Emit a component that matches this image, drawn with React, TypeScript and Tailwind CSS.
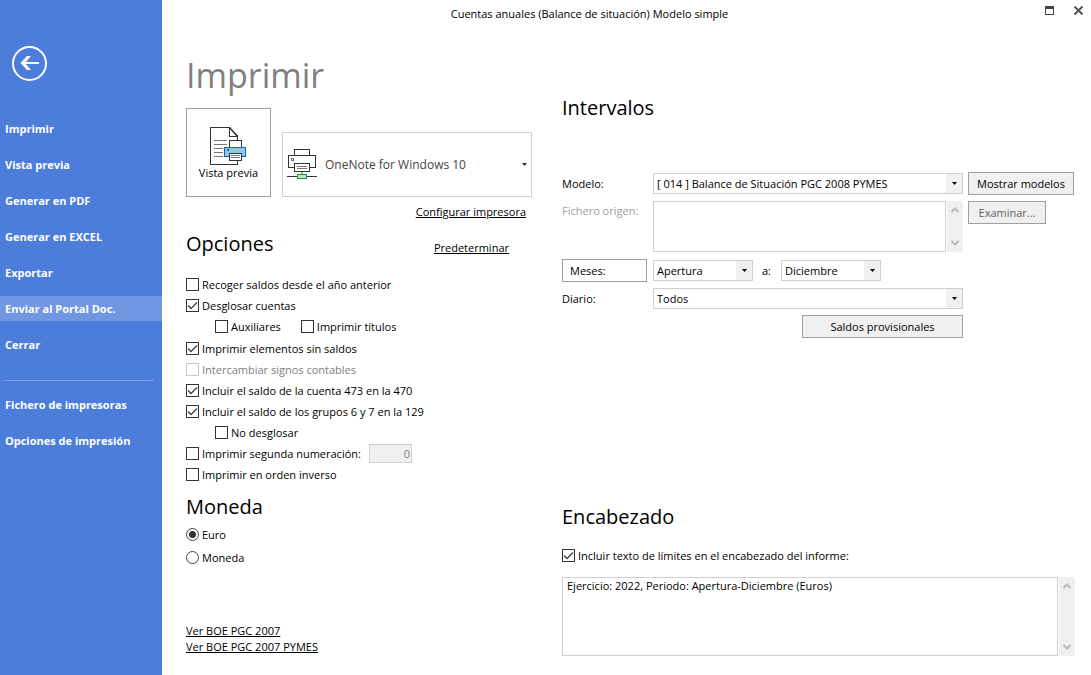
import { useState } from "react";
import type { ReactNode } from "react";

const navItems = [
  "Imprimir",
  "Vista previa",
  "Generar en PDF",
  "Generar en EXCEL",
  "Exportar",
  "Enviar al Portal Doc.",
  "Cerrar",
];

const printerItems = ["Fichero de impresoras", "Opciones de impresión"];

function NavButton({ label, active = false }: { label: string; active?: boolean }) {
  return (
    <button
      type="button"
      className={`block h-[25px] w-full px-[5px] text-left font-bold text-white ${
        active ? "bg-[#7197e3]" : "hover:bg-[#7197e3]"
      }`}
    >
      {label}
    </button>
  );
}

function Sidebar() {
  return (
    <aside className="w-[162px] shrink-0 bg-[#4d7ddb]">
      <button type="button" aria-label="Volver" className="ml-3 mt-[46px] block">
        <svg width="36" height="36" viewBox="0 0 36 36" fill="none" stroke="#fff">
          <circle cx="17.5" cy="17.5" r="16.5" strokeWidth="2" />
          <path d="M27 17H12" strokeWidth="2" />
          <path d="M19 10h-4l-6.500 7 6.500 7h4l-6-7z" fill="#fff" stroke="none" />
        </svg>
      </button>
      <nav className="mt-[34px]">
        <div className="flex flex-col gap-[11px]">
          {navItems.map((item) => (
            <NavButton key={item} label={item} active={item === "Enviar al Portal Doc."} />
          ))}
        </div>
        <hr className="mb-[11px] ml-1 mr-2 mt-[23px] border-[#7f9fe5]" />
        <div className="flex flex-col gap-[11px]">
          {printerItems.map((item) => (
            <NavButton key={item} label={item} />
          ))}
        </div>
      </nav>
    </aside>
  );
}

function TitleBar() {
  return (
    <header className="flex h-7 items-center">
      <h1 className="flex-1 text-center">
        Cuentas anuales (Balance de situación) Modelo simple
      </h1>
      <div className="flex w-[74px] justify-end gap-5 pb-2 pr-2">
        <button type="button" aria-label="Maximizar">
          <svg width="9" height="9" viewBox="0 0 9 9" shapeRendering="crispEdges">
            <path d="M.5.5h8v8h-8z" fill="none" stroke="#444" />
            <path d="M0 0h9v3H0z" fill="#444" />
          </svg>
        </button>
        <button type="button" aria-label="Cerrar ventana">
          <svg width="9" height="9" viewBox="0 0 9 9" stroke="#555" strokeWidth="2">
            <path d="M.5.5l8 8M8.5.5l-8 8" />
          </svg>
        </button>
      </div>
    </header>
  );
}

function SectionTitle({ children }: { children: ReactNode }) {
  return <h2 className="text-xl leading-8">{children}</h2>;
}

type CheckProps = {
  label: string;
  checked?: boolean;
  disabled?: boolean;
};

function Check({ label, checked = false, disabled = false }: CheckProps) {
  return (
    <label className={`flex h-[21px] items-center gap-[3px] ${disabled ? "text-[#808080]" : ""}`}>
      <span className="relative size-[13px]">
        <input
          type="checkbox"
          defaultChecked={checked}
          disabled={disabled}
          className="peer block size-[13px] appearance-none border border-[#333] bg-white disabled:border-[#c8c8c8]"
        />
        <svg
          viewBox="0 0 13 13"
          className="pointer-events-none absolute inset-0 hidden size-[13px] peer-checked:block"
          fill="none"
          stroke="#444"
          strokeWidth="1.4"
        >
          <path d="M2 6.5l3 3 6-6" />
        </svg>
      </span>
      {label}
    </label>
  );
}

function Radio({ label, checked, onChange }: { label: string; checked: boolean; onChange: () => void }) {
  return (
    <label className="flex h-[23px] items-center gap-[3px]">
      <span className="relative size-[13px]">
        <input
          type="radio"
          name="moneda"
          checked={checked}
          onChange={onChange}
          className="peer block size-[13px] appearance-none rounded-full border border-[#444] bg-white"
        />
        <span className="pointer-events-none absolute inset-[3px] hidden rounded-full bg-[#333] peer-checked:block" />
      </span>
      {label}
    </label>
  );
}

function Dropdown({ id, label, value, className = "" }: { id: string; label?: string; value: string; className?: string }) {
  return (
    <div className={`relative h-[21px] ${className}`}>
      <select
        id={id}
        aria-label={label}
        className="block size-full appearance-none border border-[#d0d0d0] bg-white pl-[3px] pr-5"
      >
        <option>{value}</option>
      </select>
      <span className="pointer-events-none absolute inset-y-px right-px flex w-4 items-center justify-center bg-[#f0f0f0]">
        <svg width="5" height="3" viewBox="0 0 5 3">
          <path d="M0 0h5L2.500 3z" />
        </svg>
      </span>
    </div>
  );
}

function ScrollBar() {
  return (
    <div className="flex w-4 flex-col items-center justify-between bg-[#f0f0f0] py-[6px]">
      <svg width="8" height="6" viewBox="0 0 8 6" fill="none" stroke="#bbb" strokeWidth="2">
        <path d="M.5 5L4 1.500 7.500 5" />
      </svg>
      <svg width="8" height="6" viewBox="0 0 8 6" fill="none" stroke="#bbb" strokeWidth="2">
        <path d="M.5 1L4 4.500 7.500 1" />
      </svg>
    </div>
  );
}

function PreviewIcon() {
  return (
    <svg width="37" height="38" viewBox="0 0 37 38" fill="none" shapeRendering="crispEdges">
      <path d="M.5.5h19l8 8v29H.5z" fill="#fff" stroke="#333" />
      <path d="M19.500.5v9h8" stroke="#333" />
      <path d="M19.500.5l8 9" stroke="#333" strokeWidth="1.500" shapeRendering="auto" />
      <path d="M4 13.500h13M4 17.500h13M4 21.500h9M4 25.500h9M4 29.500h9" stroke="#777" />
      <path d="M19.500 13.500h12v8h-12z" fill="#fff" stroke="#333" />
      <path d="M14.500 20.500h21v9h-21z" fill="#91c7f0" stroke="#0f65b5" />
      <path d="M17 22h2v2h-2z" fill="#0f65b5" />
      <path d="M19.500 26.500h12v7h-12z" fill="#fff" stroke="#333" />
      <path d="M21 28.500h9M21 30.500h9" stroke="#777" />
    </svg>
  );
}

function PrinterIcon() {
  return (
    <svg width="30" height="31" viewBox="0 0 30 31" fill="none" shapeRendering="crispEdges">
      <path d="M7.500 6.500v-6h15v6" stroke="#333" />
      <path d="M7.500 18.500h-6v-12h27v12h-6" stroke="#333" />
      <path d="M4.500 9.500h2v2h-2z" stroke="#777" />
      <path d="M7.500 14.500h15v8h-15z" fill="#fff" stroke="#333" />
      <path d="M10 17.500h10M10 19.500h10" stroke="#777" />
      <path d="M15 23v3" stroke="#aaa" strokeWidth="2" />
      <path d="M0 27.500h30" stroke="#333" />
      <path d="M10.500 25.500h9v4h-9z" fill="#bfe3c6" stroke="#169447" />
    </svg>
  );
}

function PrintOptions() {
  const [currency, setCurrency] = useState("Euro");

  return (
    <section className="flex w-[346px] shrink-0 flex-col">
      <h2 className="mt-[22px] text-[34px] leading-[50px] text-[#808080]">Imprimir</h2>

      {/* Printer */}
      <div className="mt-2 flex items-end gap-[11px]">
        <button
          type="button"
          className="flex h-[89px] w-[85px] flex-col items-center border border-[#a0a0a0] pt-[18px] leading-4"
        >
          <PreviewIcon />
          Vista previa
        </button>
        <div className="relative h-[65px] flex-1">
          <select
            aria-label="Impresora"
            className="size-full appearance-none border border-[#d0d0d0] bg-white pl-[42px] pr-5 text-xs text-[#444]"
          >
            <option>OneNote for Windows 10</option>
          </select>
          <span className="pointer-events-none absolute inset-y-0 left-[5px] flex items-center">
            <PrinterIcon />
          </span>
          <svg
            width="5"
            height="3"
            viewBox="0 0 5 3"
            className="pointer-events-none absolute right-[5px] top-[31px]"
          >
            <path d="M0 0h5L2.500 3z" fill="#333" />
          </svg>
        </div>
      </div>
      <a href="#configurar" className="mr-[6px] mt-[7px] self-end leading-4 underline">
        Configurar impresora
      </a>

      {/* Opciones */}
      <div className="mt-2 flex items-end justify-between pr-[23px]">
        <SectionTitle>Opciones</SectionTitle>
        <a href="#predeterminar" className="pb-1 leading-4 underline">
          Predeterminar
        </a>
      </div>
      <div className="mt-[14px]">
        <Check label="Recoger saldos desde el año anterior" />
        <Check label="Desglosar cuentas" checked />
        <div className="flex gap-5 pb-px pl-[29px]">
          <Check label="Auxiliares" />
          <Check label="Imprimir títulos" />
        </div>
        <Check label="Imprimir elementos sin saldos" checked />
        <Check label="Intercambiar signos contables" disabled />
        <Check label="Incluir el saldo de la cuenta 473 en la 470" checked />
        <Check label="Incluir el saldo de los grupos 6 y 7 en la 129" checked />
        <div className="pl-[29px]">
          <Check label="No desglosar" />
        </div>
        <div className="flex h-[21px] items-center gap-2">
          <Check label="Imprimir segunda numeración:" />
          <input
            aria-label="Segunda numeración"
            defaultValue="0"
            disabled
            className="h-[19px] w-[43px] border border-[#d0d0d0] bg-[#f0f0f0] px-px text-right text-[#808080]"
          />
        </div>
        <Check label="Imprimir en orden inverso" />
      </div>

      {/* Moneda */}
      <div className="mt-[6px]">
        <SectionTitle>Moneda</SectionTitle>
        <Radio label="Euro" checked={currency === "Euro"} onChange={() => setCurrency("Euro")} />
        <Radio label="Moneda" checked={currency === "Moneda"} onChange={() => setCurrency("Moneda")} />
      </div>

      <div className="mt-[54px] flex flex-col items-start leading-4">
        <a href="#boe-2007" className="underline">
          Ver BOE PGC 2007
        </a>
        <a href="#boe-2007-pymes" className="underline">
          Ver BOE PGC 2007 PYMES
        </a>
      </div>
    </section>
  );
}

function ReportSettings() {
  return (
    <section className="flex min-w-0 flex-1 flex-col pt-16">
      <SectionTitle>Intervalos</SectionTitle>

      <div className="mt-12 grid grid-cols-[86px_minmax(0,1fr)_107px] items-center gap-x-[5px] gap-y-[6px]">
        <label htmlFor="modelo">Modelo:</label>
        <Dropdown id="modelo" value="[ 014 ] Balance de Situación PGC 2008 PYMES" />
        <button type="button" className="h-[23px] w-[106px] border border-[#a0a0a0] bg-[#f0f0f0]">
          Mostrar modelos
        </button>

        <label htmlFor="origen" className="self-start pt-[2px] text-[#a0a0a0]">
          Fichero origen:
        </label>
        <div className="flex h-[52px] gap-px pb-px">
          <textarea
            id="origen"
            disabled
            className="min-w-0 flex-1 resize-none border border-[#d0d0d0] bg-white"
          />
          <ScrollBar />
        </div>
        <button
          type="button"
          disabled
          className="h-[23px] w-[78px] self-start border border-[#a0a0a0] bg-[#f0f0f0] text-[#606060]"
        >
          Examinar...
        </button>

        <button type="button" className="h-[23px] w-[85px] border border-[#a0a0a0] px-[7px] text-left">
          Meses:
        </button>
        <div className="col-span-2 flex items-center">
          <Dropdown id="desde" label="Desde" value="Apertura" className="w-[100px]" />
          <label htmlFor="hasta" className="w-7 pl-[9px]">
            a:
          </label>
          <Dropdown id="hasta" value="Diciembre" className="w-[100px]" />
        </div>

        <label htmlFor="diario">Diario:</label>
        <Dropdown id="diario" value="Todos" />

        <button
          type="button"
          className="col-start-2 h-[23px] w-[161px] justify-self-end border border-[#a0a0a0] bg-[#f0f0f0]"
        >
          Saldos provisionales
        </button>
      </div>

      {/* Encabezado */}
      <div className="mt-[163px]">
        <SectionTitle>Encabezado</SectionTitle>
        <div className="mb-[11px] mt-3">
          <Check label="Incluir texto de límites en el encabezado del informe:" checked />
        </div>
        <div className="flex h-[79px] gap-px">
          <textarea
            aria-label="Texto del encabezado"
            defaultValue="Ejercicio: 2022, Periodo: Apertura-Diciembre (Euros)"
            className="min-w-0 flex-1 resize-none border border-[#d0d0d0] px-1 leading-4"
          />
          <ScrollBar />
        </div>
      </div>
    </section>
  );
}

export default function App() {
  return (
    <div className="flex min-h-screen bg-white font-['Open_Sans','Noto_Sans',sans-serif] text-[11px] leading-4 text-black">
      <Sidebar />
      <main className="min-w-0 flex-1">
        <TitleBar />
        <div className="flex gap-[30px] pl-6 pr-4">
          <PrintOptions />
          <ReportSettings />
        </div>
      </main>
    </div>
  );
}
